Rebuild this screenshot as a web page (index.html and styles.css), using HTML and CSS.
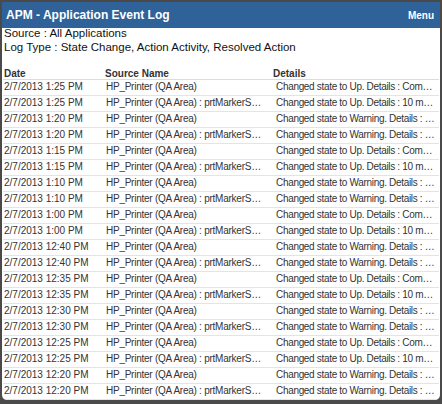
FILE: index.html
```html
<!DOCTYPE html>
<html>
<head>
<meta charset="utf-8">
<link rel="stylesheet" href="styles.css">
</head>
<body>
<div class="frame">
  <div class="header">
    <span class="title">APM - Application Event Log</span>
    <span class="menu">Menu</span>
  </div>
  <div class="content">
    <div class="info">
      <div>Source : All Applications</div>
      <div>Log Type : State Change, Action Activity, Resolved Action</div>
    </div>
    <div class="table">
      <div class="row head"><div class="c1">Date</div><div class="c2">Source Name</div><div class="c3">Details</div></div>
      <div class="row"><div class="c1">2/7/2013 1:25 PM</div><div class="c2">HP_Printer (QA Area)</div><div class="c3">Changed state to Up. Details : Component Availability : Up</div></div>
      <div class="row"><div class="c1">2/7/2013 1:25 PM</div><div class="c2">HP_Printer (QA Area) : prtMarkerSuppliesLevel</div><div class="c3">Changed state to Up. Details : 10 minutes</div></div>
      <div class="row"><div class="c1">2/7/2013 1:20 PM</div><div class="c2">HP_Printer (QA Area)</div><div class="c3">Changed state to Warning. Details : Component</div></div>
      <div class="row"><div class="c1">2/7/2013 1:20 PM</div><div class="c2">HP_Printer (QA Area) : prtMarkerSuppliesLevel</div><div class="c3">Changed state to Warning. Details : 10 minutes</div></div>
      <div class="row"><div class="c1">2/7/2013 1:15 PM</div><div class="c2">HP_Printer (QA Area)</div><div class="c3">Changed state to Up. Details : Component Availability : Up</div></div>
      <div class="row"><div class="c1">2/7/2013 1:15 PM</div><div class="c2">HP_Printer (QA Area) : prtMarkerSuppliesLevel</div><div class="c3">Changed state to Up. Details : 10 minutes</div></div>
      <div class="row"><div class="c1">2/7/2013 1:10 PM</div><div class="c2">HP_Printer (QA Area)</div><div class="c3">Changed state to Warning. Details : Component</div></div>
      <div class="row"><div class="c1">2/7/2013 1:10 PM</div><div class="c2">HP_Printer (QA Area) : prtMarkerSuppliesLevel</div><div class="c3">Changed state to Warning. Details : 10 minutes</div></div>
      <div class="row"><div class="c1">2/7/2013 1:00 PM</div><div class="c2">HP_Printer (QA Area)</div><div class="c3">Changed state to Up. Details : Component Availability : Up</div></div>
      <div class="row"><div class="c1">2/7/2013 1:00 PM</div><div class="c2">HP_Printer (QA Area) : prtMarkerSuppliesLevel</div><div class="c3">Changed state to Up. Details : 10 minutes</div></div>
      <div class="row"><div class="c1">2/7/2013 12:40 PM</div><div class="c2">HP_Printer (QA Area)</div><div class="c3">Changed state to Warning. Details : Component</div></div>
      <div class="row"><div class="c1">2/7/2013 12:40 PM</div><div class="c2">HP_Printer (QA Area) : prtMarkerSuppliesLevel</div><div class="c3">Changed state to Warning. Details : 10 minutes</div></div>
      <div class="row"><div class="c1">2/7/2013 12:35 PM</div><div class="c2">HP_Printer (QA Area)</div><div class="c3">Changed state to Up. Details : Component Availability : Up</div></div>
      <div class="row"><div class="c1">2/7/2013 12:35 PM</div><div class="c2">HP_Printer (QA Area) : prtMarkerSuppliesLevel</div><div class="c3">Changed state to Up. Details : 10 minutes</div></div>
      <div class="row"><div class="c1">2/7/2013 12:30 PM</div><div class="c2">HP_Printer (QA Area)</div><div class="c3">Changed state to Warning. Details : Component</div></div>
      <div class="row"><div class="c1">2/7/2013 12:30 PM</div><div class="c2">HP_Printer (QA Area) : prtMarkerSuppliesLevel</div><div class="c3">Changed state to Warning. Details : 10 minutes</div></div>
      <div class="row"><div class="c1">2/7/2013 12:25 PM</div><div class="c2">HP_Printer (QA Area)</div><div class="c3">Changed state to Up. Details : Component Availability : Up</div></div>
      <div class="row"><div class="c1">2/7/2013 12:25 PM</div><div class="c2">HP_Printer (QA Area) : prtMarkerSuppliesLevel</div><div class="c3">Changed state to Up. Details : 10 minutes</div></div>
      <div class="row"><div class="c1">2/7/2013 12:20 PM</div><div class="c2">HP_Printer (QA Area)</div><div class="c3">Changed state to Warning. Details : Component</div></div>
      <div class="row"><div class="c1">2/7/2013 12:20 PM</div><div class="c2">HP_Printer (QA Area) : prtMarkerSuppliesLevel</div><div class="c3">Changed state to Warning. Details : 10 minutes</div></div>
    </div>
  </div>
</div>
</body>
</html>
```
FILE: styles.css
```css
html, body {
  margin: 0;
  padding: 0;
  background: #4a4a4a;
}
body {
  width: 442px;
  height: 404px;
  overflow: hidden;
  font-family: "Liberation Sans", Arial, sans-serif;
}
.frame {
  margin: 2px 2px 0 2px;
  height: 398px;
  background: #fff;
  border-radius: 0 0 5px 5px;
  overflow: hidden;
  display: flex;
  flex-direction: column;
}
.header {
  height: 26px;
  background: #2f6298;
  display: flex;
  align-items: center;
  justify-content: space-between;
  padding: 0 6px 0 4px;
  color: #fff;
  font-weight: bold;
  flex: none;
}
.title {
  font-size: 12px;
}
.menu {
  font-size: 10px;
}
.content {
  padding: 0 1px 0 1px;
}
.info {
  font-size: 11.5px;
  color: #111;
  line-height: 14px;
  margin-top: -2px;
  padding-left: 1px;
}
.table {
  margin-top: 14px;
  font-size: 10px;
  color: #333;
}
.row {
  display: grid;
  grid-template-columns: 101px 169px 1fr;
  height: 16px;
  line-height: 14px;
  border-bottom: 1px solid #e4e4e4;
  box-sizing: border-box;
}
.row > div {
  white-space: nowrap;
  overflow: hidden;
  text-overflow: ellipsis;
  padding-right: 8px;
}
.row .c2 {
  letter-spacing: -0.25px;
}
.row .c3 {
  letter-spacing: -0.32px;
}
.row.head {
  font-weight: bold;
  color: #333;
  height: 12px;
  line-height: 11px;
  border-bottom: 1px solid #dcdcdc;
}
.row.head > div {
  letter-spacing: 0;
}
.c1 { padding-left: 1px; }
.c2 { padding-left: 2px; }
.c3 { padding-left: 3px; }
.row .c3 { padding-right: 4px; }
.row.head .c2 { padding-left: 1px; }
.row.head .c3 { padding-left: 0; }
```
